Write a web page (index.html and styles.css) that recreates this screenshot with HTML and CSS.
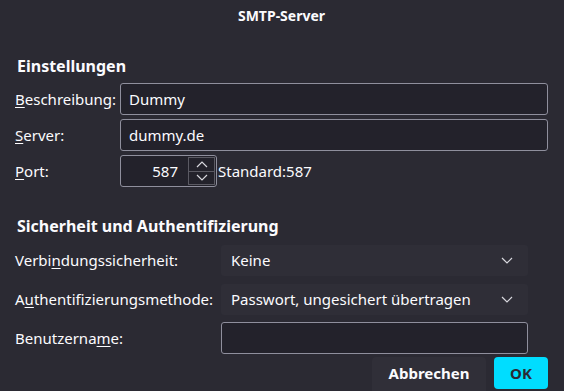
FILE: index.html
```html
<!DOCTYPE html>
<html lang="de">
<head>
    <meta charset="UTF-8">
    <title>SMTP-Server</title>
    <link rel="stylesheet" href="styles.css">
</head>
<body>
    <div class="dialog">
        <div class="title">SMTP-Server</div>

        <h2 class="heading first">Einstellungen</h2>
        <div class="grid settings">
            <label class="label"><u>B</u>eschreibung:</label>
            <div class="field">Dummy</div>
            <label class="label"><u>S</u>erver:</label>
            <div class="field">dummy.de</div>
            <label class="label"><u>P</u>ort:</label>
            <div class="port-row">
                <div class="spinner">
                    <span class="spin-value">587</span>
                    <div class="spin-btns">
                        <div class="spin-btn">
                            <svg width="12" height="7" viewBox="0 0 12 7"><path d="M1 6 L6 1 L11 6" fill="none" stroke="#d8d8de" stroke-width="1.2"/></svg>
                        </div>
                        <div class="spin-btn">
                            <svg width="12" height="7" viewBox="0 0 12 7"><path d="M1 1 L6 6 L11 1" fill="none" stroke="#d8d8de" stroke-width="1.2"/></svg>
                        </div>
                    </div>
                </div>
                <span class="hint">Standard:587</span>
            </div>
        </div>

        <h2 class="heading second">Sicherheit und Authentifizierung</h2>
        <div class="grid security">
            <label class="label">Verbi<u>n</u>dungssicherheit:</label>
            <div class="select">
                <span>Keine</span>
                <svg width="12" height="7" viewBox="0 0 12 7"><path d="M1 1 L6 6 L11 1" fill="none" stroke="#d8d8de" stroke-width="1.2"/></svg>
            </div>
            <label class="label">A<u>u</u>thentifizierungsmethode:</label>
            <div class="select">
                <span>Passwort, ungesichert übertragen</span>
                <svg width="12" height="7" viewBox="0 0 12 7"><path d="M1 1 L6 6 L11 1" fill="none" stroke="#d8d8de" stroke-width="1.2"/></svg>
            </div>
            <label class="label">Benutzerna<u>m</u>e:</label>
            <div class="field"></div>
        </div>

        <div class="buttons">
            <div class="btn cancel">Abbrechen</div>
            <div class="btn ok">OK</div>
        </div>
    </div>
</body>
</html>
```

FILE: styles.css
```css
body{
    margin: 0px;
    padding: 0px;
    background-color: #2b2a33;
    color: #fbfbfe;
    font-family: "Noto Sans", sans-serif;
    font-size: 15px;
    overflow: hidden;
}
.dialog{
    width: 564px;
    height: 391px;
    box-sizing: border-box;
    padding: 0px 16px 0px 15px;
}
.title{
    height: 34px;
    line-height: 32px;
    text-align: center;
    font-weight: bold;
    font-size: 14px;
}
.heading{
    margin: 0px;
    font-size: 16px;
    font-weight: bold;
    line-height: 22px;
    padding-left: 2px;
}
.heading.first{
    margin-top: 21px;
}
.heading.second{
    margin-top: 28px;
}
.grid{
    display: grid;
    align-items: center;
}
.settings{
    margin-top: 6px;
    grid-template-columns: 105px 1fr;
    grid-auto-rows: 32px;
    row-gap: 4px;
}
.security{
    margin-top: 7px;
    grid-template-columns: 206px 1fr;
    grid-auto-rows: 32px;
    row-gap: 7px;
    margin-right: 20px;
}
.label u{
    text-underline-offset: 2px;
}
.field{
    height: 32px;
    box-sizing: border-box;
    border: solid 1px #8f8f9d;
    border-radius: 3px;
    background-color: #23222b;
    padding: 0px 8px;
    line-height: 30px;
}
.port-row{
    display: flex;
    align-items: center;
}
.spinner{
    width: 97px;
    height: 32px;
    box-sizing: border-box;
    border: solid 1px #8f8f9d;
    border-radius: 3px;
    background-color: #23222b;
    display: flex;
}
.spin-value{
    flex: 1;
    text-align: right;
    line-height: 30px;
    padding-right: 10px;
}
.spin-btns{
    width: 27px;
    display: flex;
    flex-direction: column;
    padding: 1px 1px 1px 0px;
}
.spin-btn{
    flex: 1;
    border: solid 1px #5b5a63;
    display: flex;
    align-items: center;
    justify-content: center;
}
.spin-btn + .spin-btn{
    border-top: none;
}
.hint{
    margin-left: 1px;
}
.select{
    height: 31px;
    background-color: #2f2e37;
    border-radius: 3px;
    display: flex;
    align-items: center;
    justify-content: space-between;
    padding: 0px 15px 0px 10px;
}
.buttons{
    margin-top: 3px;
    display: flex;
    justify-content: flex-end;
    gap: 8px;
}
.btn{
    height: 32px;
    line-height: 32px;
    font-weight: bold;
    text-align: center;
    border-radius: 4px;
}
.cancel{
    width: 114px;
    background-color: #302f38;
    height: 36px;
    border-radius: 4px 4px 0px 0px;
}
.ok{
    width: 54px;
    background-color: #00ddff;
    color: #2b2a33;
}
```
